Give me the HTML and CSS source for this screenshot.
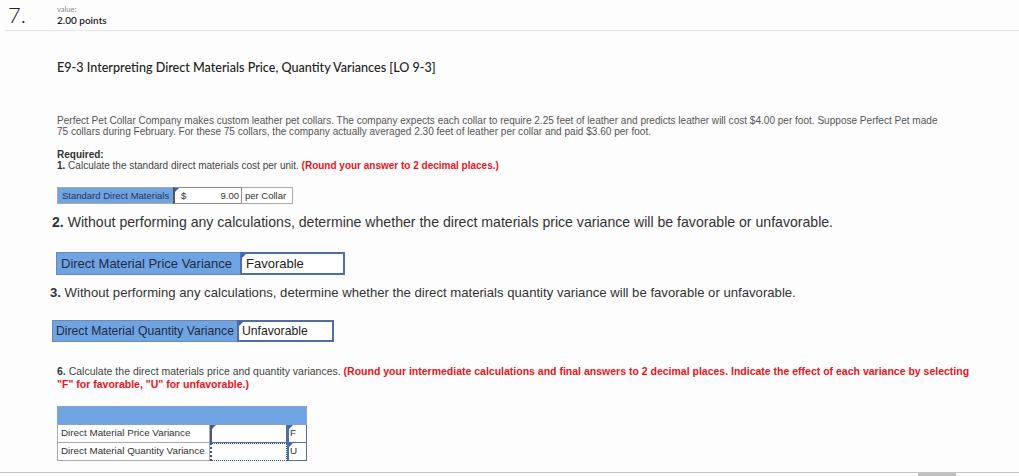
FILE: index.html
```html
<!DOCTYPE html>
<html>
<head>
<meta charset="utf-8">
<link rel="stylesheet" href="styles.css">
</head>
<body>
<div class="page">
  <header class="qhead">
    <div class="qnum">7.</div>
    <div class="qval">
      <div class="vlabel">value:</div>
      <div class="vpoints">2.00 points</div>
    </div>
  </header>

  <h1 class="title">E9-3 Interpreting Direct Materials Price, Quantity Variances [LO 9-3]</h1>

  <p class="intro">Perfect Pet Collar Company makes custom leather pet collars. The company expects each collar to require 2.25 feet of leather and predicts leather will cost $4.00 per foot. Suppose Perfect Pet made 75 collars during February. For these 75 collars, the company actually averaged 2.30 feet of leather per collar and paid $3.60 per foot.</p>

  <p class="req"><b>Required:</b><br><b>1.</b> Calculate the standard direct materials cost per unit. <span class="red">(Round your answer to 2 decimal places.)</span></p>

  <div class="sdm">
    <div class="sdm-label">Standard Direct Materials</div>
    <div class="sdm-input"><span class="flag"></span><span>$</span><span>9.00</span></div>
    <div class="sdm-unit">per Collar</div>
  </div>

  <p class="q2"><b>2.</b> Without performing any calculations, determine whether the direct materials price variance will be favorable or unfavorable.</p>

  <div class="pv">
    <div class="pv-label">Direct Material Price Variance</div>
    <div class="pv-input"><span class="flag"></span>Favorable</div>
  </div>

  <p class="q3"><b>3.</b> Without performing any calculations, determine whether the direct materials quantity variance will be favorable or unfavorable.</p>

  <div class="qv">
    <div class="qv-label">Direct Material Quantity Variance</div>
    <div class="qv-input"><span class="flag"></span>Unfavorable</div>
  </div>

  <p class="q6"><b>6.</b> Calculate the direct materials price and quantity variances. <span class="red">(Round your intermediate calculations and final answers to 2 decimal places. Indicate the effect of each variance by selecting</span><br><span class="red">"F" for favorable, "U" for unfavorable.)</span></p>

  <div class="vtable">
    <div class="vt-head"></div>
    <div class="vt-row">
      <div class="vt-label">Direct Material Price Variance</div>
      <div class="vt-input solid"><span class="flag"></span></div>
      <div class="vt-fu"><span class="flag"></span>F</div>
    </div>
    <div class="vt-row">
      <div class="vt-label">Direct Material Quantity Variance</div>
      <div class="vt-input dotted"></div>
      <div class="vt-fu"><span class="flag"></span>U</div>
    </div>
  </div>

  <div class="bottombar"><div class="thumb"></div></div>
</div>
</body>
</html>
```

FILE: styles.css
```css
html, body {
  margin: 0;
  padding: 0;
  background: #fdfdfd;
}
.page {
  width: 1019px;
  height: 476px;
  overflow: hidden;
  font-family: Arial, "Liberation Sans", sans-serif;
  color: #333;
  display: flex;
  flex-direction: column;
}
.qhead {
  display: flex;
  align-items: flex-start;
  margin-left: 5px;
  border-bottom: 1px solid #e6e6e6;
  height: 30px;
}
.qnum {
  font-family: Lato, "Open Sans", sans-serif;
  font-size: 22px;
  line-height: 22px;
  font-weight: 300;
  color: #222;
  width: 52px;
  padding-left: 3px;
  padding-top: 4px;
  box-sizing: border-box;
}
.qval {
  padding-top: 5px;
}
.vlabel {
  font-family: Lato, sans-serif;
  font-size: 7.5px;
  line-height: 9px;
  color: #888;
}
.vpoints {
  font-family: Lato, sans-serif;
  font-size: 10px;
  line-height: 12px;
  font-weight: 600;
  color: #222;
}
.title {
  font-family: Lato, "Open Sans", sans-serif;
  font-weight: 500;
  font-size: 12.6px;
  line-height: 16px;
  color: #222;
  margin: 29px 0 0 57px;
}
.intro {
  font-size: 10.05px;
  line-height: 11px;
  color: #555;
  margin: 39px 0 0 57px;
  width: 888px;
}
.req {
  font-size: 10px;
  line-height: 11px;
  color: #444;
  margin: 12px 0 0 57px;
}
.req b {
  color: #333;
}
.red {
  color: #e8141a;
  font-weight: bold;
}
.sdm {
  display: flex;
  margin: 16px 0 0 57px;
  height: 17px;
  font-size: 9.5px;
  line-height: 15px;
}
.sdm-label {
  background: #6fa3e2;
  color: #2a3550;
  width: 116px;
  padding-left: 4px;
  box-sizing: border-box;
  border: 1px solid #a9a9a9;
  border-right: none;
}
.sdm-input {
  position: relative;
  width: 69px;
  background: #fff;
  border: 1px solid #8c8c8c;
  border-left: 2px solid #555;
  display: flex;
  justify-content: space-between;
  padding: 0 2px 0 6px;
  box-sizing: border-box;
}
.sdm-unit {
  width: 51px;
  background: #fff;
  border: 1px solid #a9a9a9;
  border-left: none;
  padding-left: 3px;
  box-sizing: border-box;
}
.flag {
  position: absolute;
  left: 0;
  top: 0;
  width: 0;
  height: 0;
  border-top: 4px solid #3a64a8;
  border-right: 4px solid transparent;
}
.q2 {
  font-size: 14.1px;
  line-height: 17px;
  color: #333;
  margin: 10px 0 0 52px;
}
.pv {
  display: flex;
  margin: 21px 0 0 56px;
  height: 23px;
  font-size: 13px;
  line-height: 21px;
}
.pv-label {
  background: #6fa3e2;
  color: #1f2c44;
  width: 184px;
  padding-left: 4px;
  box-sizing: border-box;
  border: 1px solid #6a88b6;
  border-right: none;
}
.pv-input {
  position: relative;
  width: 105px;
  background: #fff;
  border: 2px solid #4d6fa6;
  padding-left: 4px;
  box-sizing: border-box;
  line-height: 19px;
  color: #222;
}
.q3 {
  font-size: 13.15px;
  line-height: 15px;
  color: #333;
  margin: 10px 0 0 50px;
}
.qv {
  display: flex;
  margin: 20px 0 0 52px;
  height: 22px;
  font-size: 12.2px;
  line-height: 20px;
}
.qv-label {
  background: #6fa3e2;
  color: #1f2c44;
  width: 185px;
  padding-left: 3px;
  box-sizing: border-box;
  border: 1px solid #6a88b6;
  border-right: none;
}
.qv-input {
  position: relative;
  width: 97px;
  background: #fff;
  border: 2px solid #4d6fa6;
  padding-left: 3px;
  box-sizing: border-box;
  line-height: 18px;
  color: #222;
}
.q6 {
  font-size: 10.5px;
  line-height: 12.5px;
  color: #444;
  margin: 23px 0 0 57px;
  width: 940px;
}
.q6 b {
  color: #333;
}
.vtable {
  margin: 16px 0 0 57px;
  width: 250px;
  font-size: 9.85px;
  line-height: 16px;
}
.vt-head {
  height: 19px;
  background: #6fa3e2;
  border: 1px solid #8aa3c4;
  box-sizing: border-box;
}
.vt-row {
  display: flex;
  height: 18px;
}
.vt-label {
  width: 153px;
  background: #fff;
  border: 1px solid #a9a9a9;
  border-top: none;
  padding-left: 3px;
  box-sizing: border-box;
  color: #333;
}
.vt-input {
  position: relative;
  width: 77px;
  background: #fff;
  box-sizing: border-box;
}
.vt-input.solid {
  border: 1px solid #5a6f95;
  border-left: 2px solid #4a5a7a;
  border-top: none;
}
.vt-input.dotted {
  border: 1px dotted #2a55a8;
  border-left: 2px dotted #2a55a8;
}
.vt-fu {
  position: relative;
  width: 20px;
  background: #fff;
  border: 1px solid #4d6fa6;
  border-left: 2px solid #4d6fa6;
  border-top: none;
  box-sizing: border-box;
  padding-left: 1px;
  color: #333;
}
.bottombar {
  margin-top: auto;
  height: 3px;
  border-top: 1px solid #c4c4c4;
  position: relative;
}
.thumb {
  position: absolute;
  left: 918px;
  top: 0;
  width: 38px;
  height: 3px;
  background: #c0c0c0;
}
```
